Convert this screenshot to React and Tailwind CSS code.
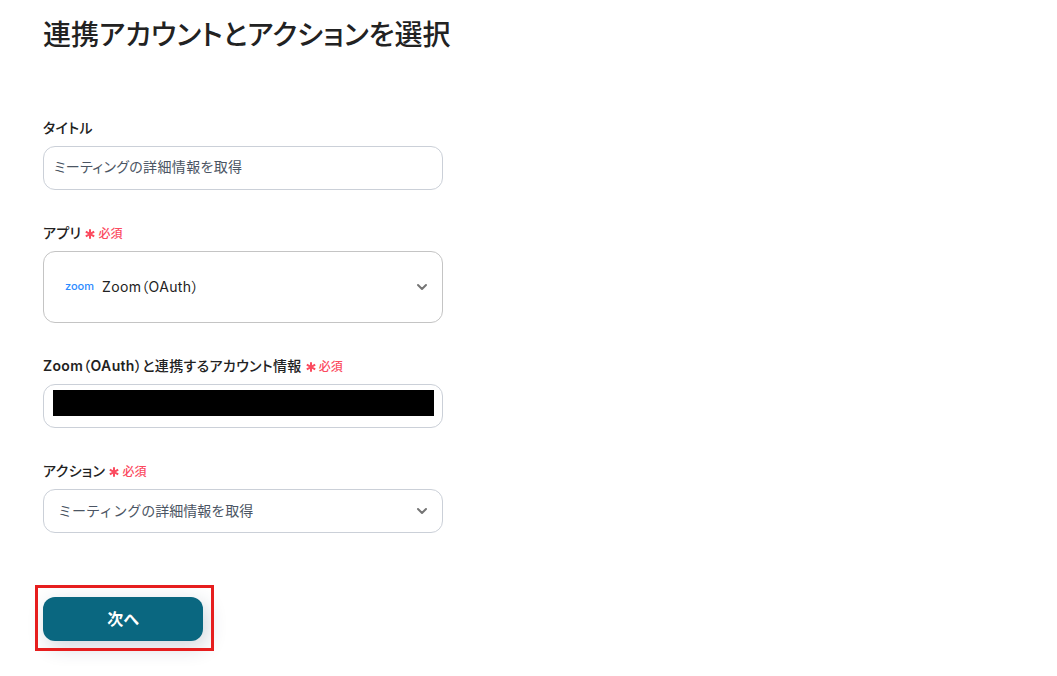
import { useState } from 'react';
import { ChevronDown } from 'lucide-react';

function RequiredMark() {
    return (
        <span className="flex items-center text-xs font-medium text-[#fb4b5f] gap-[3px] ml-1 mt-0.5">
            <svg className="w-2.5 h-2.5" fill="none" stroke="currentColor" strokeWidth={2} viewBox="0 0 10 10" aria-hidden="true">
                <path d="M5 0.3v9.4M0.8 2.6l8.4 4.8M9.2 2.6L0.8 7.4" />
            </svg>
            必須
        </span>
    );
}

function Field({ id, label, required, children }) {
    return (
        <div>
            <label
                htmlFor={id}
                className="flex items-center h-[21px] mb-2 text-sm font-[Inter,'Noto_Sans_CJK_JP_Medium','Noto_Sans_CJK_JP',sans-serif] font-semibold text-[#222222]"
            >
                <span className="tracking-wide">{label}</span>
                {required && <RequiredMark />}
            </label>
            <div className="relative">{children}</div>
        </div>
    );
}

function SelectArrow() {
    return (
        <ChevronDown
            className="absolute right-[13px] top-1/2 -translate-y-1/2 w-4 h-4 text-[#757575] pointer-events-none"
            strokeWidth={3}
            aria-hidden="true"
        />
    );
}

export default function App() {
    const [title, setTitle] = useState('ミーティングの詳細情報を取得');
    const [account, setAccount] = useState('');

    return (
        <main className="min-h-screen bg-white px-[43px] pt-3.5 pb-8 font-[Inter,'Noto_Sans_CJK_JP',sans-serif] [font-feature-settings:'palt'] text-[#222222]">
            <h1 className="text-[28px] leading-[42px] font-[Inter,'Noto_Sans_CJK_JP_Medium','Noto_Sans_CJK_JP',sans-serif] font-medium">
                連携アカウントとアクションを選択
            </h1>

            <form className="mt-[61px] max-w-[400px]" onSubmit={(e) => e.preventDefault()}>
                <div className="flex flex-col gap-8">
                    <Field id="title" label="タイトル">
                        <input
                            id="title"
                            type="text"
                            value={title}
                            onChange={(e) => setTitle(e.target.value)}
                            className="block w-full h-11 px-2.5 pb-1 rounded-xl border border-[#cbd0d8] bg-white text-sm text-[#4b5563] tracking-wide"
                        />
                    </Field>

                    <Field id="app" label="アプリ" required>
                        <span className="absolute left-[22px] top-1/2 -translate-y-1/2 pb-0.5 text-[11px] leading-4 font-medium text-[#2d8cff] pointer-events-none" aria-hidden="true">
                            zoom
                        </span>
                        <select
                            id="app"
                            className="block appearance-none w-full h-[72px] pl-[58px] pr-10 rounded-xl border border-[#c4c4c4] bg-transparent text-sm tracking-wide"
                        >
                            <option>Zoom（OAuth）</option>
                        </select>
                        <SelectArrow />
                    </Field>

                    <Field id="account" label="Zoom（OAuth）と連携するアカウント情報" required>
                        {/* account name is masked */}
                        <div className="h-11 pl-[9px] pr-2 pt-[5px] rounded-xl border border-[#cbd0d8]">
                            <input
                                id="account"
                                type="text"
                                value={account}
                                onChange={(e) => setAccount(e.target.value)}
                                className="block w-full h-[26px] bg-black text-black"
                            />
                        </div>
                    </Field>

                    <Field id="action" label="アクション" required>
                        <select
                            id="action"
                            className="block appearance-none w-full h-11 pl-3.5 pr-10 rounded-xl border border-[#cbd0d8] bg-white text-sm text-[#4b5563] [font-feature-settings:normal]"
                        >
                            <option>ミーティングの詳細情報を取得</option>
                        </select>
                        <SelectArrow />
                    </Field>
                </div>

                <div className="relative inline-block mt-16">
                    <button
                        type="submit"
                        className="block w-40 h-11 rounded-xl bg-[#0a6780] text-white text-base font-bold shadow-[4px_6px_20px_rgba(30,50,80,0.2)]"
                    >
                        次へ
                    </button>
                    <span className="absolute -left-2 -top-3 -right-[11px] -bottom-2.5 border-3 border-[#e61e1e] pointer-events-none" />
                </div>
            </form>
        </main>
    );
}
